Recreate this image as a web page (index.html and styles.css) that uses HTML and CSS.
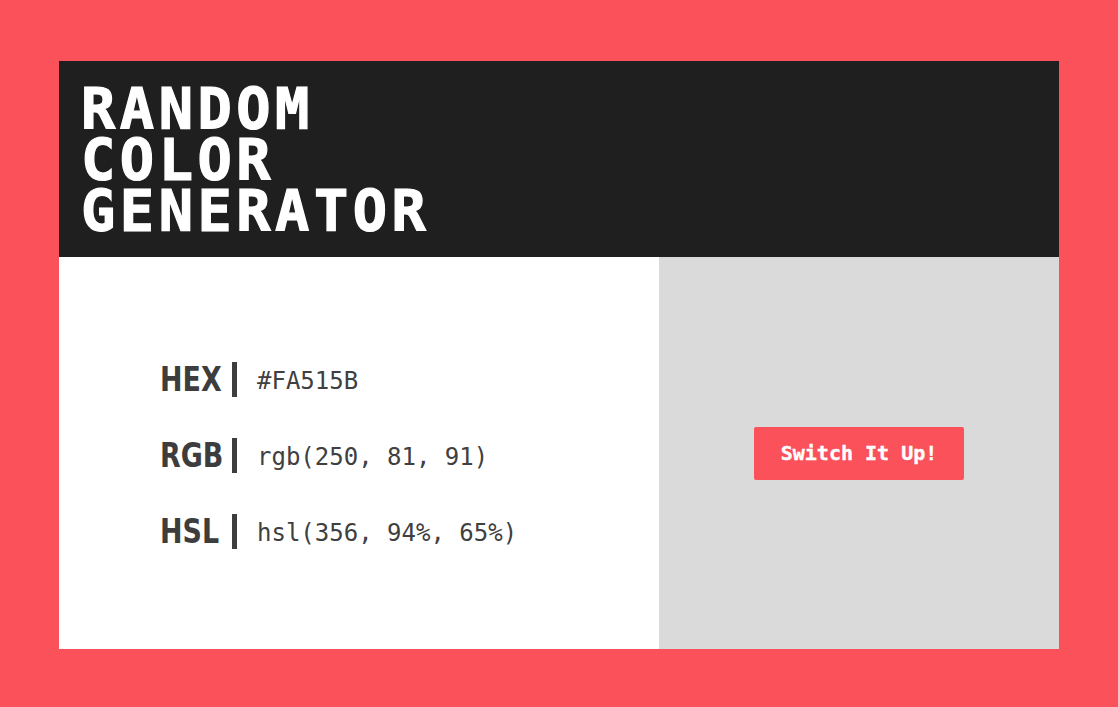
FILE: index.html
```html
<!DOCTYPE html>
<html lang="en">
<head>
<meta charset="utf-8">
<title>Random Color Generator</title>
<link rel="stylesheet" href="styles.css">
</head>
<body>
<main class="card">
  <header class="header">
    <h1 class="title"><span class="line">RANDOM</span><span class="line">COLOR</span><span class="line">GENERATOR</span></h1>
  </header>
  <section class="body">
    <div class="values">
      <div class="row"><span class="label"><span class="label-text">HEX</span></span><span class="bar"></span><span class="value">#FA515B</span></div>
      <div class="row"><span class="label"><span class="label-text">RGB</span></span><span class="bar"></span><span class="value">rgb(250, 81, 91)</span></div>
      <div class="row"><span class="label"><span class="label-text">HSL</span></span><span class="bar"></span><span class="value">hsl(356, 94%, 65%)</span></div>
    </div>
    <div class="action">
      <button class="btn">Switch It Up!</button>
    </div>
  </section>
</main>
</body>
</html>
```
FILE: styles.css
```css
html, body {
  margin: 0;
  padding: 0;
}
body {
  background: #fa515b;
  width: 1118px;
  height: 707px;
  display: flex;
  align-items: flex-start;
  justify-content: center;
  padding-top: 61px;
  box-sizing: border-box;
}
.card {
  width: 1000px;
  display: flex;
  flex-direction: column;
}
.header {
  background: #201f20;
  height: 196px;
  box-sizing: border-box;
  padding: 23px 22px 0;
}
.title {
  margin: 0;
  color: #ffffff;
  font-family: "DejaVu Sans Mono", monospace;
  font-weight: bold;
  font-size: 57px;
  letter-spacing: 4.5px;
  -webkit-text-stroke: 1.2px #ffffff;
  display: flex;
  flex-direction: column;
}
.line {
  display: block;
  height: 51px;
  line-height: 51px;
}
.body {
  display: flex;
  height: 392px;
}
.values {
  width: 600px;
  background: #ffffff;
  box-sizing: border-box;
  padding-left: 101px;
  padding-top: 4px;
  display: flex;
  flex-direction: column;
  justify-content: center;
  gap: 40px;
}
.row {
  display: flex;
  align-items: center;
  height: 36px;
  color: #3d3d3d;
}
.label {
  width: 72px;
  font-family: "Liberation Sans Narrow", "DejaVu Sans Condensed", sans-serif;
  font-weight: bold;
  font-size: 34px;
  line-height: 36px;
}
.label-text {
  display: inline-block;
  transform: scaleX(0.88);
  transform-origin: left center;
}
.bar {
  width: 5px;
  height: 35px;
  background: #3d3d3d;
  margin-right: 20px;
}
.value {
  font-family: "DejaVu Sans Mono", monospace;
  font-size: 24px;
  line-height: 36px;
  color: #404040;
  padding-top: 4px;
}
.action {
  width: 400px;
  background: #dadada;
  display: flex;
  align-items: center;
  justify-content: center;
}
.btn {
  width: 210px;
  height: 53px;
  background: #fa515b;
  color: #ffffff;
  border: none;
  border-radius: 2px;
  font-family: "DejaVu Sans Mono", monospace;
  font-weight: bold;
  font-size: 20px;
  -webkit-text-stroke: 0.4px #ffffff;
  padding: 0;
}
```
